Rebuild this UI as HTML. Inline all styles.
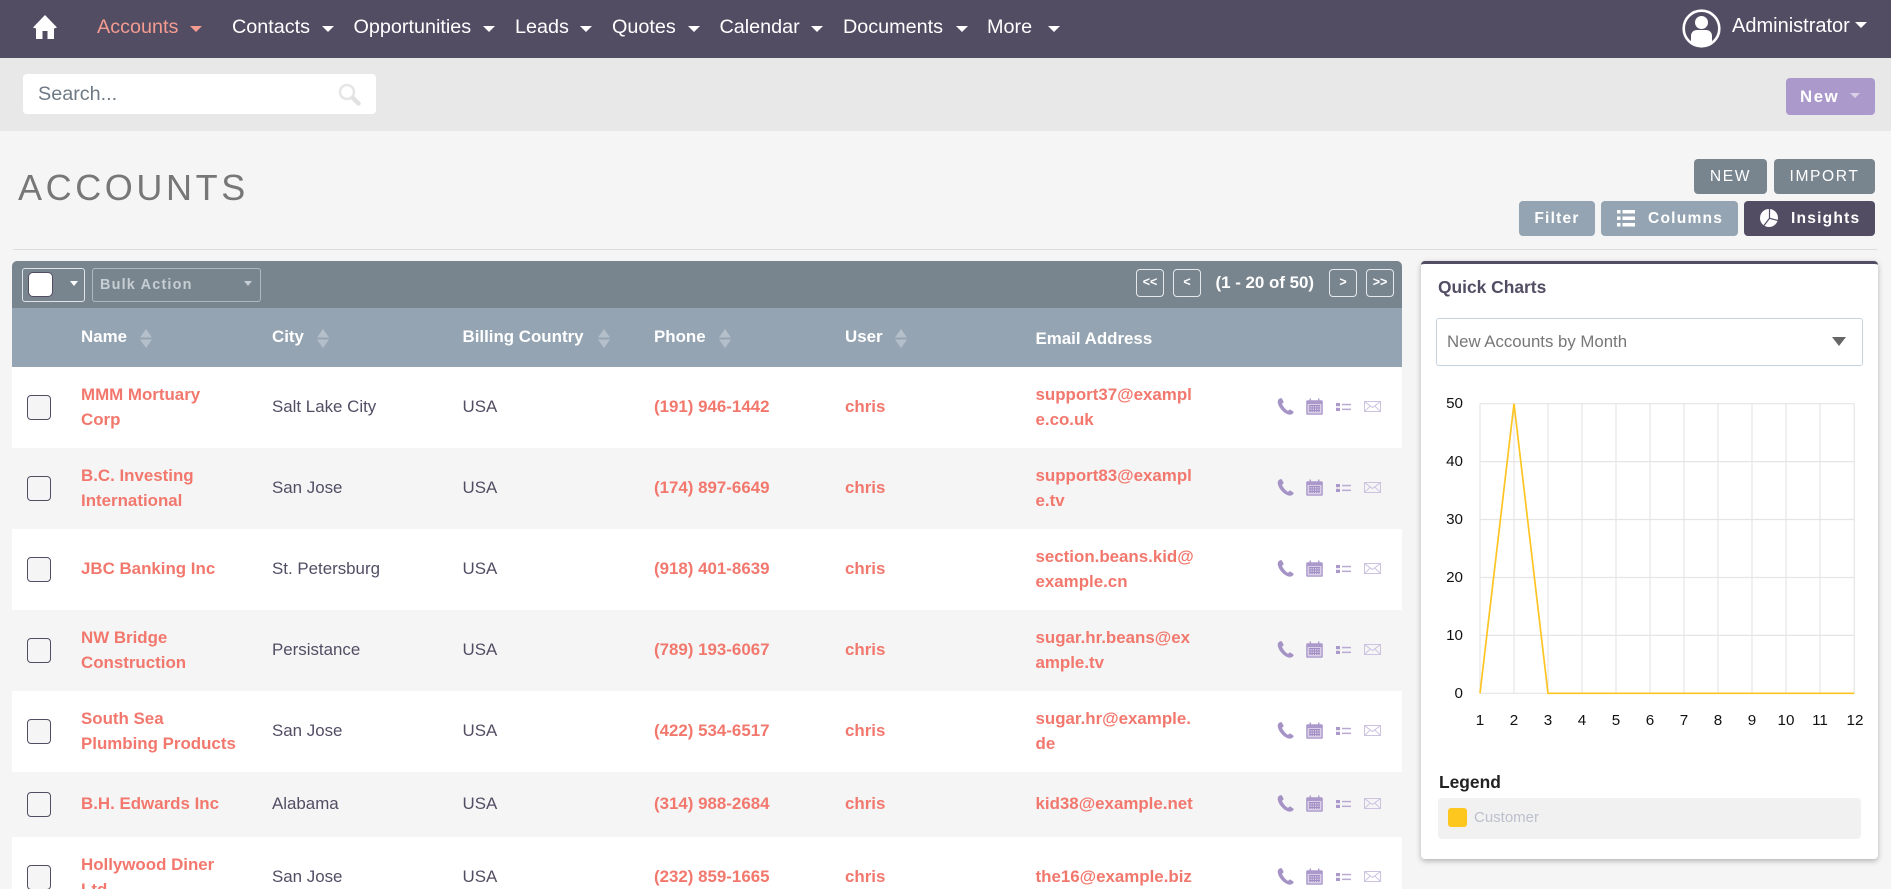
<!DOCTYPE html>
<html><head><meta charset="utf-8"><title>Accounts</title>
<style>
*{box-sizing:border-box}
html,body{margin:0;padding:0;width:1891px;height:889px;overflow:hidden;background:#f5f5f5;font-family:"Liberation Sans",Arial,sans-serif}
#p{position:relative;width:1891px;height:889px;overflow:hidden}
.a{position:absolute;white-space:nowrap}
.box{position:absolute}
.nav{color:#fff;font-size:19.8px;line-height:26px;top:14px}
.car{position:absolute;width:0;height:0;border-left:6px solid transparent;border-right:6px solid transparent;border-top:6px solid #fff}
.btn{position:absolute;border-radius:4px;color:#fff;display:flex;align-items:center;justify-content:center;white-space:nowrap}
.b1{background:#78858f;top:159px;height:35px;font-size:15.6px;letter-spacing:1.6px}
.b2{top:201px;height:35px;font-size:15.6px;font-weight:bold;letter-spacing:1.2px;background:#94a4b2}
.pg{position:absolute;top:269px;width:28px;height:28px;border:1px solid #e6e9ec;border-radius:4px;color:#fff;font-size:12.5px;font-weight:bold;text-align:center;line-height:25px}
.th{position:absolute;top:324px;color:#fff;font-size:16.9px;font-weight:bold;line-height:26px;white-space:nowrap}
.sort{position:absolute;top:329px;width:12px;height:19px}
.r{position:absolute;left:12px;width:1390px;height:81px}
.c{position:absolute;top:-2px;bottom:0;display:flex;align-items:center;font-size:16.9px;line-height:25px;color:#534d64;white-space:nowrap}
.l{color:#f2786e;font-weight:bold}
.cb{position:absolute;left:15px;width:24px;height:25px;border:1px solid #534d64;border-radius:4px;background:#f5f5f5}
.i{position:absolute}
.yl{position:absolute;right:428px;font-size:15.2px;color:#111;line-height:16px}
.xl{position:absolute;top:713px;width:30px;text-align:center;font-size:15.2px;color:#111;line-height:16px}
</style></head><body><div id="p">
<svg width="0" height="0" style="position:absolute">
<symbol id="ph" viewBox="0 0 17 17"><path d="M3.2 0.3 C1.5 1 .6 2.2 .7 4 C1 8.6 5.8 14.6 11 16.4 C13 17 15 16.6 16.3 15 C16.8 14.4 16.7 13.8 16 13.3 L13.6 11.8 C13 11.4 12.4 11.5 11.8 12.1 L11 12.9 C8.5 11.6 6 8.4 5 5.8 L6 5 C6.6 4.5 6.7 4 6.4 3.3 L5 .7 C4.6 .1 4 0 3.2 .3Z" fill="#a593c6"/></symbol>
<symbol id="ca" viewBox="0 0 17 17"><path d="M1.5 2.2H3.6V.5H5V2.2H12V.5H13.4V2.2H15.5C16.3 2.2 16.8 2.7 16.8 3.5V15.5C16.8 16.3 16.3 16.8 15.500 16.8H1.5C.7 16.8 .2 16.3 .2 15.500V3.5C.2 2.7 .7 2.2 1.5 2.2Z" fill="#ab99cb"/><rect x="1.6" y="6" width="13.8" height="9.4" fill="#d9d0e8"/><path d="M3 7.5H14M3 10H14M3 12.5H14M4 7V14M6.2 7V14M8.5 7V14M10.8 7V14M13 7V14" stroke="#a08dc4" stroke-width="1.1"/></symbol>
<symbol id="li" viewBox="0 0 15 8"><rect x="0" y="0" width="4" height="3.2" fill="#ab99cb"/><rect x="0" y="4.8" width="4" height="3.2" fill="#ab99cb"/><rect x="6" y=".8" width="9" height="1.5" fill="#b9aad4"/><rect x="6" y="5.6" width="9" height="1.5" fill="#b9aad4"/></symbol>
<symbol id="en" viewBox="0 0 17 11"><rect x=".5" y=".5" width="16" height="10" fill="none" stroke="#cdc3e1"/><path d="M.8 .8L8.5 6.5L16.2 .8M.8 10.2L6.2 5M16.2 10.2L10.8 5" fill="none" stroke="#cdc3e1"/></symbol>
</svg>

<div class="box" style="left:0;top:0;width:1891px;height:58px;background:#534d64"></div>
<div class="box" style="left:0;top:58px;width:1891px;height:73px;background:#e8e8e8"></div>

<svg class="i" style="left:33px;top:15px" width="24" height="24" viewBox="0 0 24 24"><path d="M12 0L24 12.5L21 13.5V24H14.5V16H9.5V24H3V13.5L0 12.5Z" fill="#fff"/></svg>
<div class="a nav" style="left:97px;color:#f49c90">Accounts</div><div class="car" style="left:190px;top:26px;border-top-color:#f49c90"></div>
<div class="a nav" style="left:232px">Contacts</div><div class="car" style="left:322px;top:26px"></div>
<div class="a nav" style="left:353.5px">Opportunities</div><div class="car" style="left:483px;top:26px"></div>
<div class="a nav" style="left:515px">Leads</div><div class="car" style="left:580px;top:26px"></div>
<div class="a nav" style="left:612px">Quotes</div><div class="car" style="left:688px;top:26px"></div>
<div class="a nav" style="left:719.5px">Calendar</div><div class="car" style="left:811px;top:26px"></div>
<div class="a nav" style="left:843px">Documents</div><div class="car" style="left:956px;top:26px"></div>
<div class="a nav" style="left:987px">More</div><div class="car" style="left:1048px;top:26px"></div>

<svg class="i" style="left:1682px;top:9px" width="39" height="39" viewBox="0 0 39 39"><circle cx="19.5" cy="19.5" r="17.8" fill="#534d64" stroke="#fff" stroke-width="2.6"/><circle cx="19.5" cy="13.5" r="6.5" fill="#fff"/><path d="M9 33V27C9 23 12 21 15 21H24C27 21 30 23 30 27V33C27 36 23 37 19.5 37C16 37 12 36 9 33Z" fill="#fff"/></svg>
<div class="a nav" style="left:1732px;top:13px;font-size:20px">Administrator</div><div class="car" style="left:1855px;top:22px"></div>

<div class="box" style="left:23px;top:74px;width:353px;height:40px;background:#fff;border-radius:4px"></div>
<div class="a" style="left:38px;top:81px;font-size:19.8px;line-height:26px;color:#6e7a85">Search...</div>
<svg class="i" style="left:338px;top:83px" width="23" height="23" viewBox="0 0 23 23"><circle cx="9" cy="9" r="7" fill="none" stroke="#e6e6e6" stroke-width="2.6"/><path d="M15 15L20.5 20.5" stroke="#e2e2e2" stroke-width="4.5" stroke-linecap="round"/></svg>

<div class="btn" style="left:1786px;top:78px;width:89px;height:37px;background:#ab99cb;justify-content:flex-start;padding-left:14px;font-weight:bold;font-size:16.8px;letter-spacing:1.6px">New</div>
<div class="car" style="left:1850px;top:93px;border-left-width:5px;border-right-width:5px;border-top-width:5px;border-top-color:#d9d0e8"></div>

<div class="a" style="left:18px;top:167px;font-size:36px;line-height:42px;letter-spacing:3.6px;color:#777">ACCOUNTS</div>

<div class="btn b1" style="left:1694px;width:73px">NEW</div>
<div class="btn b1" style="left:1774px;width:101px">IMPORT</div>
<div class="btn b2" style="left:1519px;width:76px">Filter</div>
<div class="btn b2" style="left:1601px;width:137px;justify-content:flex-start;padding-left:47px">Columns</div>
<svg class="i" style="left:1617px;top:210px" width="18" height="17" viewBox="0 0 18 17"><path d="M0 0H3.5V3.5H0ZM5.5 0H18V3.5H5.5ZM0 6.5H3.5V10H0ZM5.5 6.5H18V10H5.5ZM0 13H3.5V16.5H0ZM5.5 13H18V16.5H5.5Z" fill="#fff"/></svg>
<div class="btn b2" style="left:1744px;width:131px;background:#534d64;justify-content:flex-start;padding-left:47px">Insights</div>
<svg class="i" style="left:1760px;top:209px" width="18" height="18" viewBox="0 0 18 18"><circle cx="9" cy="9" r="9" fill="#fff"/><path d="M9.5 -1V9.3L18 11.5M9.5 9.3L4 16.5" fill="none" stroke="#534d64" stroke-width="1.2"/></svg>

<div class="box" style="left:13px;top:249px;width:1864px;height:1px;background:#dcdcdc"></div>

<!-- toolbar -->
<div class="box" style="left:12px;top:261px;width:1390px;height:47px;background:#78858f;border-radius:5px 5px 0 0"></div>
<div class="box" style="left:22px;top:268px;width:63px;height:34px;border:1px solid #dfe3e6;border-radius:3px"></div>
<div class="box" style="left:28px;top:272px;width:25px;height:25px;background:#fff;border:1px solid #534d64;border-radius:5px"></div>
<div class="car" style="left:70px;top:281px;border-left-width:4px;border-right-width:4px;border-top-width:5px"></div>
<div class="box" style="left:92px;top:268px;width:169px;height:34px;border:1px solid #aeb8c0;border-radius:3px"></div>
<div class="a" style="left:100px;top:275px;font-size:14.4px;line-height:20px;font-weight:bold;letter-spacing:1.2px;color:#c7ced3">Bulk Action</div>
<div class="car" style="left:244px;top:281px;border-left-width:4px;border-right-width:4px;border-top-width:5px;border-top-color:#c7ced3"></div>

<div class="pg" style="left:1136px">&lt;&lt;</div>
<div class="pg" style="left:1173px">&lt;</div>
<div class="a" style="left:1215.500px;top:270px;font-size:16.9px;line-height:26px;font-weight:bold;color:#fff">(1 - 20 of 50)</div>
<div class="pg" style="left:1329px">&gt;</div>
<div class="pg" style="left:1366px">&gt;&gt;</div>

<!-- header -->
<div class="box" style="left:12px;top:308px;width:1390px;height:59px;background:#94a4b2"></div>
<div class="th" style="left:81px">Name</div>
<div class="th" style="left:272px">City</div>
<div class="th" style="left:462.5px">Billing Country</div>
<div class="th" style="left:654px">Phone</div>
<div class="th" style="left:845px">User</div>
<div class="th" style="left:1035.5px;top:326px">Email Address</div>
<svg class="sort" style="left:140px" viewBox="0 0 12 19"><path d="M6 0L12 8.5H0ZM6 19L0 10.500H12Z" fill="#b4bfc9"/></svg>
<svg class="sort" style="left:317px" viewBox="0 0 12 19"><path d="M6 0L12 8.5H0ZM6 19L0 10.500H12Z" fill="#b4bfc9"/></svg>
<svg class="sort" style="left:598px" viewBox="0 0 12 19"><path d="M6 0L12 8.5H0ZM6 19L0 10.500H12Z" fill="#b4bfc9"/></svg>
<svg class="sort" style="left:719px" viewBox="0 0 12 19"><path d="M6 0L12 8.5H0ZM6 19L0 10.500H12Z" fill="#b4bfc9"/></svg>
<svg class="sort" style="left:895px" viewBox="0 0 12 19"><path d="M6 0L12 8.5H0ZM6 19L0 10.500H12Z" fill="#b4bfc9"/></svg>

<!-- rows -->
<div class="r" style="top:367px;background:#fff"><div class="cb" style="top:28px"></div>
<div class="c l" style="left:69px">MMM Mortuary<br>Corp</div><div class="c" style="left:260px">Salt Lake City</div><div class="c" style="left:450.5px">USA</div><div class="c l" style="left:642px">(191) 946-1442</div><div class="c l" style="left:833px">chris</div><div class="c l" style="left:1023.5px">support37@exampl<br>e.co.uk</div>
<svg class="i" style="left:1265px;top:31px" width="17" height="17"><use href="#ph"/></svg><svg class="i" style="left:1294px;top:31px" width="17" height="17"><use href="#ca"/></svg><svg class="i" style="left:1324px;top:36px" width="15" height="8"><use href="#li"/></svg><svg class="i" style="left:1352px;top:34px" width="17" height="11"><use href="#en"/></svg></div>

<div class="r" style="top:448px;background:#f5f5f5"><div class="cb" style="top:28px"></div>
<div class="c l" style="left:69px">B.C. Investing<br>International</div><div class="c" style="left:260px">San Jose</div><div class="c" style="left:450.5px">USA</div><div class="c l" style="left:642px">(174) 897-6649</div><div class="c l" style="left:833px">chris</div><div class="c l" style="left:1023.5px">support83@exampl<br>e.tv</div>
<svg class="i" style="left:1265px;top:31px" width="17" height="17"><use href="#ph"/></svg><svg class="i" style="left:1294px;top:31px" width="17" height="17"><use href="#ca"/></svg><svg class="i" style="left:1324px;top:36px" width="15" height="8"><use href="#li"/></svg><svg class="i" style="left:1352px;top:34px" width="17" height="11"><use href="#en"/></svg></div>

<div class="r" style="top:529px;background:#fff"><div class="cb" style="top:28px"></div>
<div class="c l" style="left:69px">JBC Banking Inc</div><div class="c" style="left:260px">St. Petersburg</div><div class="c" style="left:450.5px">USA</div><div class="c l" style="left:642px">(918) 401-8639</div><div class="c l" style="left:833px">chris</div><div class="c l" style="left:1023.5px">section.beans.kid@<br>example.cn</div>
<svg class="i" style="left:1265px;top:31px" width="17" height="17"><use href="#ph"/></svg><svg class="i" style="left:1294px;top:31px" width="17" height="17"><use href="#ca"/></svg><svg class="i" style="left:1324px;top:36px" width="15" height="8"><use href="#li"/></svg><svg class="i" style="left:1352px;top:34px" width="17" height="11"><use href="#en"/></svg></div>

<div class="r" style="top:610px;background:#f5f5f5"><div class="cb" style="top:28px"></div>
<div class="c l" style="left:69px">NW Bridge<br>Construction</div><div class="c" style="left:260px">Persistance</div><div class="c" style="left:450.5px">USA</div><div class="c l" style="left:642px">(789) 193-6067</div><div class="c l" style="left:833px">chris</div><div class="c l" style="left:1023.5px">sugar.hr.beans@ex<br>ample.tv</div>
<svg class="i" style="left:1265px;top:31px" width="17" height="17"><use href="#ph"/></svg><svg class="i" style="left:1294px;top:31px" width="17" height="17"><use href="#ca"/></svg><svg class="i" style="left:1324px;top:36px" width="15" height="8"><use href="#li"/></svg><svg class="i" style="left:1352px;top:34px" width="17" height="11"><use href="#en"/></svg></div>

<div class="r" style="top:691px;background:#fff"><div class="cb" style="top:28px"></div>
<div class="c l" style="left:69px">South Sea<br>Plumbing Products</div><div class="c" style="left:260px">San Jose</div><div class="c" style="left:450.5px">USA</div><div class="c l" style="left:642px">(422) 534-6517</div><div class="c l" style="left:833px">chris</div><div class="c l" style="left:1023.5px">sugar.hr@example.<br>de</div>
<svg class="i" style="left:1265px;top:31px" width="17" height="17"><use href="#ph"/></svg><svg class="i" style="left:1294px;top:31px" width="17" height="17"><use href="#ca"/></svg><svg class="i" style="left:1324px;top:36px" width="15" height="8"><use href="#li"/></svg><svg class="i" style="left:1352px;top:34px" width="17" height="11"><use href="#en"/></svg></div>

<div class="r" style="top:772px;height:65px;background:#f5f5f5"><div class="cb" style="top:20px"></div>
<div class="c l" style="left:69px">B.H. Edwards Inc</div><div class="c" style="left:260px">Alabama</div><div class="c" style="left:450.5px">USA</div><div class="c l" style="left:642px">(314) 988-2684</div><div class="c l" style="left:833px">chris</div><div class="c l" style="left:1023.5px">kid38@example.net</div>
<svg class="i" style="left:1265px;top:23px" width="17" height="17"><use href="#ph"/></svg><svg class="i" style="left:1294px;top:23px" width="17" height="17"><use href="#ca"/></svg><svg class="i" style="left:1324px;top:28px" width="15" height="8"><use href="#li"/></svg><svg class="i" style="left:1352px;top:26px" width="17" height="11"><use href="#en"/></svg></div>

<div class="r" style="top:837px;background:#fff"><div class="cb" style="top:28px"></div>
<div class="c l" style="left:69px">Hollywood Diner<br>Ltd.</div><div class="c" style="left:260px">San Jose</div><div class="c" style="left:450.5px">USA</div><div class="c l" style="left:642px">(232) 859-1665</div><div class="c l" style="left:833px">chris</div><div class="c l" style="left:1023.5px">the16@example.biz</div>
<svg class="i" style="left:1265px;top:31px" width="17" height="17"><use href="#ph"/></svg><svg class="i" style="left:1294px;top:31px" width="17" height="17"><use href="#ca"/></svg><svg class="i" style="left:1324px;top:36px" width="15" height="8"><use href="#li"/></svg><svg class="i" style="left:1352px;top:34px" width="17" height="11"><use href="#en"/></svg></div>

<!-- panel -->
<div class="box" style="left:1421px;top:261px;width:457px;height:598px;background:#fff;border-top:3px solid #534d64;border-radius:4px;box-shadow:0 2px 6px rgba(0,0,0,.28)"></div>
<div class="a" style="left:1438px;top:274px;font-size:17.4px;line-height:26px;font-weight:bold;color:#534d64">Quick Charts</div>
<div class="box" style="left:1436px;top:318px;width:427px;height:48px;border:1px solid #c5d2dd;border-radius:3px;background:#fff"></div>
<div class="a" style="left:1447px;top:330px;font-size:16.8px;line-height:24px;color:#777">New Accounts by Month</div>
<div class="car" style="left:1832px;top:337px;border-left-width:7px;border-right-width:7px;border-top-width:9px;border-top-color:#666"></div>

<svg class="i" style="left:1470px;top:395px" width="395" height="310" viewBox="1470 395 395 310">
<g stroke="#e5e5e5" stroke-width="1.2" fill="none">
<path d="M1480 403.700V693.300M1514 403.700V693.300M1548 403.700V693.300M1582 403.700V693.300M1616 403.700V693.300M1650 403.700V693.300M1684 403.700V693.300M1718 403.700V693.300M1752 403.700V693.300M1786 403.700V693.300M1820 403.700V693.300M1854.300 403.700V693.300"/>
<path d="M1480 403.700H1854.300M1480 461.600H1854.300M1480 519.500H1854.300M1480 577.500H1854.300M1480 635.400H1854.300M1480 693.300H1854.300"/>
</g>
<polyline points="1480,693.300 1514,403.700 1548,693.300 1854.300,693.300" fill="none" stroke="#fec522" stroke-width="1.7"/>
</svg>
<div class="yl" style="top:396px">50</div>
<div class="yl" style="top:454px">40</div>
<div class="yl" style="top:512px">30</div>
<div class="yl" style="top:570px">20</div>
<div class="yl" style="top:628px">10</div>
<div class="yl" style="top:686px">0</div>
<div class="xl" style="left:1465px">1</div>
<div class="xl" style="left:1499px">2</div>
<div class="xl" style="left:1533px">3</div>
<div class="xl" style="left:1567px">4</div>
<div class="xl" style="left:1601px">5</div>
<div class="xl" style="left:1635px">6</div>
<div class="xl" style="left:1669px">7</div>
<div class="xl" style="left:1703px">8</div>
<div class="xl" style="left:1737px">9</div>
<div class="xl" style="left:1771px">10</div>
<div class="xl" style="left:1805px">11</div>
<div class="xl" style="left:1840px">12</div>

<div class="a" style="left:1439px;top:770px;font-size:17.4px;line-height:24px;font-weight:bold;color:#222">Legend</div>
<div class="box" style="left:1438px;top:798px;width:423px;height:41px;background:#f1f1f1;border-radius:4px"></div>
<div class="box" style="left:1448px;top:808px;width:19px;height:19px;background:#fdc71f;border-radius:3px"></div>
<div class="a" style="left:1474px;top:808px;font-size:15px;line-height:20px;color:#bcc0cc">Customer</div>
</div></body></html>
